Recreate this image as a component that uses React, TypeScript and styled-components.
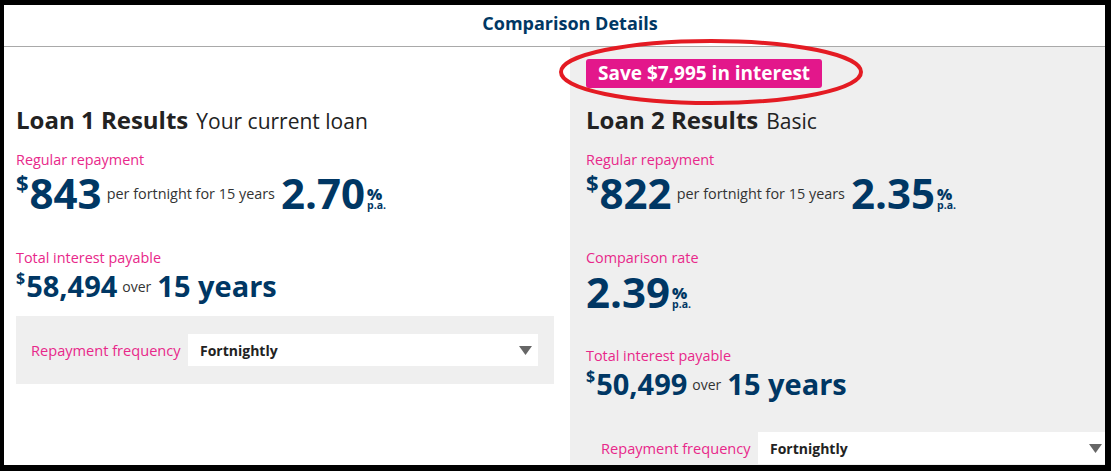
import React from 'react';
import styled, { createGlobalStyle } from 'styled-components';

const navy = '#003764';
const pink = '#e8288a';

const GlobalStyle = createGlobalStyle`
  html, body {
    margin: 0;
    padding: 0;
    background: #000;
    width: 1111px;
    height: 471px;
    overflow: hidden;
  }
  body {
    font-family: "Open Sans", Lato, Arial, sans-serif;
  }
`;

const Frame = styled.div`
  position: relative;
  margin: 5px 0 0 4px;
  width: 1101px;
  height: 460px;
  background: #fff;
  overflow: hidden;
`;

const Page = styled.div`
  width: 1132px;
  height: 100%;
  display: flex;
  flex-direction: column;
`;

const Header = styled.div`
  padding: 7px 0 12px;
  line-height: 22px;
  font-size: 18px;
  font-weight: 700;
  color: ${navy};
  text-align: center;
  border-bottom: 1px solid #a9a9a9;
`;

const Columns = styled.div`
  flex: 1;
  display: grid;
  grid-template-columns: 566px 566px;
`;

const Column = styled.div<{ $shaded?: boolean }>`
  padding: 12px 16px 0 ${(p) => (p.$shaded ? 16 : 12)}px;
  background: ${(p) => (p.$shaded ? '#efefef' : '#fff')};
  display: flex;
  flex-direction: column;
  align-items: flex-start;
`;

const BadgeSlot = styled.div`
  height: 29px;
`;

const Badge = styled.div`
  display: inline-block;
  height: 29px;
  padding: 0 12px;
  border-radius: 3px;
  background: #e3178b;
  color: #fff;
  font-size: 19px;
  font-weight: 700;
  line-height: 29px;
`;

const Title = styled.h2`
  margin: 17px 0 0;
  font-size: 24px;
  line-height: 30px;
  font-weight: 700;
  color: #222;

  span {
    font-weight: 400;
    font-size: 21px;
    margin-left: 8px;
  }
`;

const Label = styled.div<{ $gap: number }>`
  margin-top: ${(p) => p.$gap}px;
  font-size: 14.4px;
  line-height: 18px;
  color: ${pink};
`;

const Amount = styled.div<{ $size: number; $gap?: number }>`
  margin-top: ${(p) => p.$gap ?? 2}px;
  font-size: ${(p) => p.$size}px;
  line-height: ${(p) => p.$size + 2}px;
  font-weight: 700;
  color: ${navy};
  white-space: nowrap;
`;

const Currency = styled.sup<{ $size: number }>`
  font-size: ${(p) => p.$size}px;
  line-height: 1;
  vertical-align: top;
  margin-right: 1px;
`;

const Small = styled.span<{ $size: number; $raise: number }>`
  font-size: ${(p) => p.$size}px;
  line-height: 1;
  font-weight: 400;
  color: #333;
  vertical-align: ${(p) => p.$raise}px;
  margin: 0 6px 0 5px;
`;

const Percent = styled.span`
  display: inline-block;
  margin-left: 2px;
  font-size: 16px;
  line-height: 1;

  b {
    display: block;
    line-height: 12px;
  }
  i {
    display: block;
    font-style: normal;
    font-size: 10.5px;
    line-height: 10px;
  }
`;

const FreqBox = styled.div<{ $gap: number }>`
  margin-top: ${(p) => p.$gap}px;
  width: 538px;
  box-sizing: border-box;
  padding: 18px 16px 18px 15px;
  background: #efefef;
  display: flex;
  align-items: center;
  gap: 9px;
`;

const FreqLabel = styled.div`
  flex: none;
  width: 148px;
  font-size: 14.6px;
  color: ${pink};
  white-space: nowrap;
`;

const Select = styled.div`
  flex: 1;
  height: 32px;
  padding: 0 6px 0 12px;
  background: #fff;
  display: flex;
  align-items: center;
  justify-content: space-between;
  font-size: 14px;
  font-weight: 700;
  color: #222;
`;

const Caret = styled.svg`
  width: 13px;
  height: 9px;
`;

const Annotation = styled.svg`
  position: absolute;
  left: 553px;
  top: 31px;
  width: 308px;
  height: 70px;
  pointer-events: none;
`;

type Rate = { value: string };

const RateValue = ({ value }: Rate) => (
  <>
    {value}
    <Percent>
      <b>%</b>
      <i>p.a.</i>
    </Percent>
  </>
);

const Frequency = ({ gap }: { gap: number }) => (
  <FreqBox $gap={gap}>
    <FreqLabel>Repayment frequency</FreqLabel>
    <Select>
      Fortnightly
      <Caret viewBox="0 0 13 9">
        <path d="M0 0H13L6.5 9Z" fill="#666" />
      </Caret>
    </Select>
  </FreqBox>
);

const Repayment = ({ amount, rate }: { amount: string; rate: string }) => (
  <>
    <Label $gap={15}>Regular repayment</Label>
    <Amount $size={42}>
      <Currency $size={22}>$</Currency>
      {amount}
      <Small $size={14.4} $raise={10}>per fortnight for 15 years</Small>
      <RateValue value={rate} />
    </Amount>
  </>
);

const Interest = ({ gap, amount }: { gap: number; amount: string }) => (
  <>
    <Label $gap={gap}>Total interest payable</Label>
    <Amount $size={29} $gap={3}>
      <Currency $size={16}>$</Currency>
      {amount}
      <Small $size={14} $raise={5}>over</Small>
      15 years
    </Amount>
  </>
);

export default function App() {
  return (
    <>
      <GlobalStyle />
      <Frame>
        <Page>
          <Header>Comparison Details</Header>
          <Columns>
            <Column>
              <BadgeSlot />
              <Title>
                Loan 1 Results<span>Your current loan</span>
              </Title>
              <Repayment amount="843" rate="2.70" />
              <Interest gap={34} amount="58,494" />
              <Frequency gap={15} />
            </Column>
            <Column $shaded>
              <Badge>Save $7,995 in interest</Badge>
              <Title>
                Loan 2 Results<span>Basic</span>
              </Title>
              <Repayment amount="822" rate="2.35" />
              <Label $gap={34}>Comparison rate</Label>
              <Amount $size={42} $gap={3}>
                <RateValue value="2.39" />
              </Amount>
              <Interest gap={33} amount="50,499" />
              <Frequency gap={15} />
            </Column>
          </Columns>
        </Page>
        <Annotation viewBox="0 0 308 70">
          <ellipse cx="154" cy="36" rx="150" ry="31" fill="none" stroke="#e41b23" strokeWidth="4" />
        </Annotation>
      </Frame>
    </>
  );
}
